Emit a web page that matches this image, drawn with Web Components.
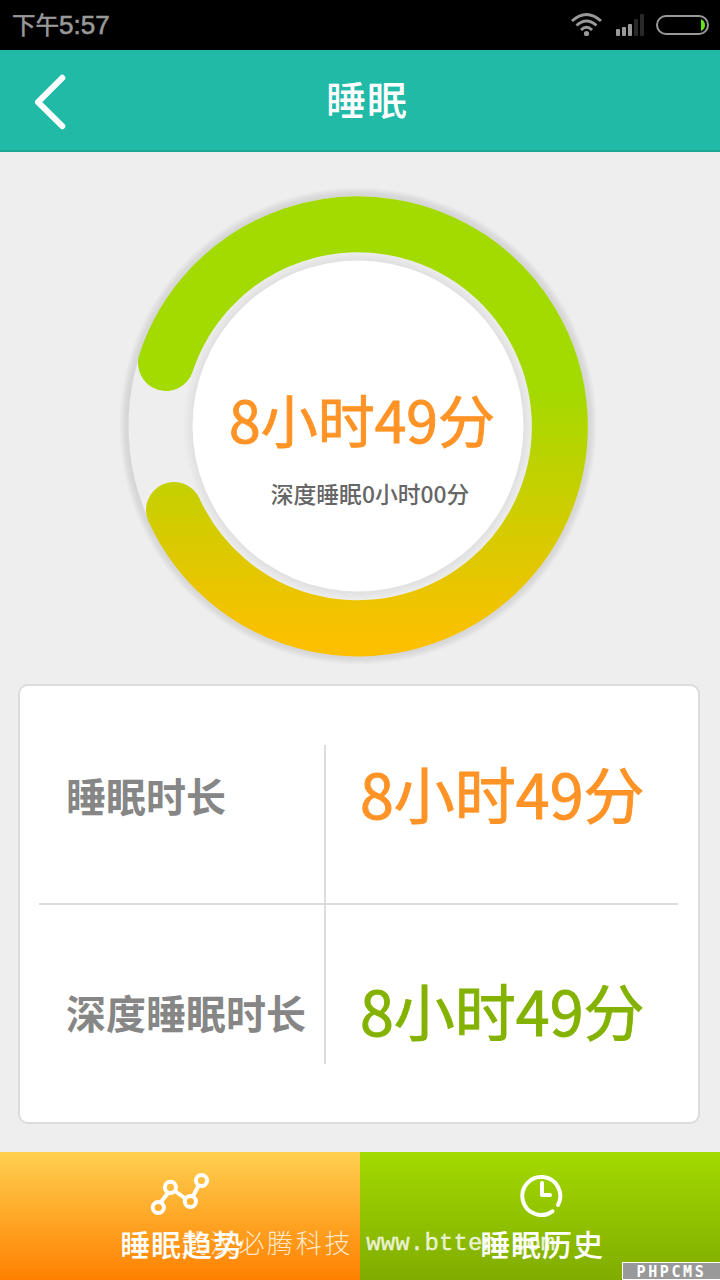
<!DOCTYPE html>
<html lang="zh-CN">
<head>
<meta charset="utf-8">
<title>睡眠</title>
<style>
    html, body {
        margin: 0;
        padding: 0;
    }

    body {
        width: 720px;
        height: 1280px;
        overflow: hidden;
        background: #eee;
        font-family: "Noto Sans CJK SC", sans-serif;
    }
</style>
</head>
<body>
<sleep-app></sleep-app>

<template id="status_bar">
    <style>
        :host {
            display: flex;
            align-items: center;
            height: 50px;
            padding: 0 11px 0 12px;
            box-sizing: border-box;
            background: #000;
            color: #999;
        }

        .time {
            flex: 1;
            font: 26px/50px "Liberation Sans", "Noto Sans CJK SC", sans-serif;
            -webkit-text-stroke: 0.6px #999;
        }

        .time span {
            font-size: 23.5px;
        }

        svg {
            display: block;
        }
    </style>
    <div class="time"><span>下午</span>5:57</div>
    <svg width="139" height="50" viewBox="570 0 139 50" fill="none">
        <g stroke="#999" stroke-width="3">
            <path d="M572 21Q586.500 8 601 21"/>
            <path d="M576.500 25.500Q586.500 16.500 596.500 25.500"/>
            <path d="M581 30Q586.500 24.500 592 30"/>
        </g>
        <circle cx="586.500" cy="33.500" r="2.600" fill="#999"/>
        <g fill="#999">
            <rect x="616" y="29" width="4" height="7" rx="1"/>
            <rect x="622" y="27" width="4" height="9" rx="1"/>
            <rect x="628" y="24" width="4" height="12" rx="1"/>
        </g>
        <g fill="#292929">
            <rect x="634" y="19" width="4" height="17" rx="1"/>
            <rect x="640" y="14" width="4" height="22" rx="1"/>
        </g>
        <rect x="657" y="16" width="51" height="18" rx="9" stroke="#999" stroke-width="2"/>
        <path d="M701 19Q705 21 705 25T701 31Z" fill="#62e418"/>
    </svg>
</template>

<template id="title_bar">
    <style>
        :host {
            display: grid;
            grid-template-columns: 100px 1fr 100px;
            height: 102px;
            box-sizing: border-box;
            border-bottom: 2px solid #1da794;
            background: #20baa7;
            color: #fff;
        }

        h1 {
            margin: 0;
            padding-left: 14px;
            font-size: 40px;
            font-weight: 500;
            line-height: 97px;
            letter-spacing: 1px;
            text-align: center;
        }
    </style>
    <svg width="100" height="100" viewBox="0 0 100 100">
        <path d="M62.300 27.800L38 52.200L62.300 76.200" fill="none" stroke="#fff" stroke-width="6" stroke-linecap="round" stroke-linejoin="round"/>
    </svg>
    <h1><slot></slot></h1>
</template>

<template id="sleep_ring">
    <style>
        :host {
            display: grid;
            height: 532px;
        }

        svg, .label {
            grid-area: 1 / 1;
        }

        .label {
            display: flex;
            flex-direction: column;
            align-items: center;
            z-index: 1;
            white-space: nowrap;
        }

        .total {
            margin: 226px 0 0 4px;
            font-size: 57px;
            line-height: 80px;
            color: #ff9326;
            -webkit-text-stroke: 0.9px #ff9326;
        }

        .deep {
            margin: 19px 0 0 20px;
            font-size: 22.8px;
            font-weight: 500;
            line-height: 34px;
            color: #666;
        }
    </style>
    <svg width="720" height="532" viewBox="0 152 720 532">
        <defs>
            <linearGradient id="arc" gradientUnits="userSpaceOnUse" x1="0" y1="390" x2="0" y2="642">
                <stop offset="0" stop-color="#a3da00"/>
                <stop offset="1" stop-color="#fcc000"/>
            </linearGradient>
            <radialGradient id="outer" gradientUnits="userSpaceOnUse" cx="358" cy="426" r="239">
                <stop offset="0.962" stop-color="#d5d5d5"/>
                <stop offset="0.976" stop-color="#dadada"/>
                <stop offset="1" stop-color="#eee"/>
            </radialGradient>
            <radialGradient id="inner" gradientUnits="userSpaceOnUse" cx="358" cy="426" r="175">
                <stop offset="0.945" stop-color="#e0e0e0"/>
                <stop offset="1" stop-color="#eee"/>
            </radialGradient>
        </defs>
        <circle cx="358" cy="426" r="239" fill="url(#outer)"/>
        <circle cx="358" cy="426" r="229.500" fill="#eee"/>
        <circle cx="358" cy="426" r="175" fill="url(#inner)"/>
        <circle cx="358" cy="426" r="165.500" fill="#fff"/>
        <path d="M166 363A202 202 0 1 1 174 510" fill="none" stroke="url(#arc)" stroke-width="56" stroke-linecap="round"/>
    </svg>
    <div class="label">
        <div class="total"><slot name="total"></slot></div>
        <div class="deep"><slot name="deep"></slot></div>
    </div>
</template>

<template id="sleep_card">
    <style>
        :host {
            display: grid;
            grid-template-rows: 160px 159px;
            height: 440px;
            margin: 0 20px 28px 18px;
            padding: 59px 20px 58px 19px;
            box-sizing: border-box;
            border: 2px solid #dcdcdc;
            border-radius: 10px;
            background: #fff;
        }
    </style>
    <slot></slot>
</template>

<template id="sleep_row">
    <style>
        :host {
            display: grid;
            grid-template-columns: 287px 1fr;
        }

        :host(:first-child) {
            border-bottom: 2px solid #dcdcdc;
        }

        div {
            display: flex;
            align-items: center;
            height: 102px;
            white-space: nowrap;
        }

        :host(:not(:first-child)) div {
            padding-top: 57px;
        }

        :host(:first-child) div {
            padding-bottom: 56px;
        }

        .name {
            padding-left: 27px;
            border-right: 2px solid #dcdcdc;
            font-size: 40px;
            font-weight: 700;
            line-height: 58px;
            color: #868686;
        }

        .name slot {
            display: block;
            margin-top: -3px;
        }

        .value {
            padding-left: 34px;
            font-size: 61px;
            line-height: 88px;
            color: var(--value-color);
            -webkit-text-stroke: 0.9px var(--value-color);
        }

        .value slot {
            display: block;
            margin-top: -7px;
        }
    </style>
    <div class="name"><slot></slot></div>
    <div class="value"><slot name="value"></slot></div>
</template>

<template id="nav_button">
    <style>
        :host {
            display: flex;
            flex: 1;
            flex-direction: column;
            align-items: center;
            height: 128px;
            color: #fff;
        }

        .icon {
            height: 69px;
        }

        .text {
            margin-left: 4px;
            font-size: 30px;
            font-weight: 500;
            line-height: 44px;
            letter-spacing: 0.9px;
        }
    </style>
    <div class="icon"><slot name="icon"></slot></div>
    <div class="text"><slot></slot></div>
</template>

<template id="water_mark">
    <style>
        /* site stamp laid over the two buttons */
        :host {
            position: absolute;
            left: 181px;
            top: 1222px;
            display: flex;
            gap: 13px;
            color: rgba(255, 255, 255, 0.8);
            white-space: nowrap;
            line-height: 40px;
        }

        .cn {
            font-size: 26px;
            font-weight: 300;
            letter-spacing: 2.700px;
        }

        .url {
            font: 24px/44px "Liberation Mono", monospace;
            letter-spacing: 0.150px;
            -webkit-text-stroke: 0.4px;
        }
    </style>
    <span class="cn">武汉必腾科技</span>
    <span class="url">www.btten.com</span>
</template>

<template id="cms_badge">
    <style>
        :host {
            position: absolute;
            left: 622px;
            top: 1262px;
            width: 98px;
            height: 18px;
            box-sizing: border-box;
            border: solid #fff;
            border-width: 1px 0 1px 1px;
            background: #999;
            color: #fff;
            font: bold 15px/18px "DejaVu Sans Mono", monospace;
            letter-spacing: 2.600px;
            text-align: center;
        }
    </style>
    PHPCMS
</template>

<template id="sleep_app">
    <style>
        :host {
            display: flex;
            flex-direction: column;
            height: 1280px;
            position: relative;
        }

        nav {
            display: flex;
        }

        .trend {
            background: linear-gradient(#ffd050, #ff8000);
        }

        .history {
            background: linear-gradient(#a3da00, #80ac00);
        }

        svg {
            display: block;
        }
    </style>
    <status-bar></status-bar>
    <title-bar>睡眠</title-bar>
    <sleep-ring>
        <span slot="total">8小时49分</span>
        <span slot="deep">深度睡眠0小时00分</span>
    </sleep-ring>
    <sleep-card>
        <sleep-row style="--value-color: #ff9326">睡眠时长<span slot="value">8小时49分</span></sleep-row>
        <sleep-row style="--value-color: #84b200">深度睡眠时长<span slot="value">8小时49分</span></sleep-row>
    </sleep-card>
    <nav>
        <nav-button class="trend">
            <svg slot="icon" width="60" height="69" viewBox="150 1152 60 69" fill="none" stroke="#fff" stroke-width="4">
                <path d="M161 1202L168 1193M175 1191L186 1199M193 1196L199 1185"/>
                <circle cx="158.300" cy="1207.500" r="5.600"/>
                <circle cx="170.400" cy="1187.300" r="5.600"/>
                <circle cx="190.400" cy="1201.500" r="5.600"/>
                <circle cx="201.500" cy="1180.500" r="5.600"/>
            </svg>
            睡眠趋势
        </nav-button>
        <nav-button class="history">
            <svg slot="icon" width="60" height="69" viewBox="509 1153 60 69" fill="none" stroke="#fff" stroke-width="4" stroke-linecap="round">
                <path d="M557 1206A19 19 0 1 0 551.500 1212.300"/>
                <path d="M541 1184V1196H549" stroke-linejoin="round"/>
            </svg>
            睡眠历史
        </nav-button>
    </nav>
    <water-mark></water-mark>
    <cms-badge></cms-badge>
</template>

<script>
    (function (customElements) {
        'use strict'

        // Every element only clones its own template: my-element -> #my_element
        function register(name) {
            customElements.define(name, class extends HTMLElement {
                constructor() {
                    super();
                    const templ = document.querySelector('#' + name.replace('-', '_'));
                    this.attachShadow({ mode: 'open' }).appendChild(document.importNode(templ.content, true));
                }
            });
        }

        ['status-bar', 'title-bar', 'sleep-ring', 'sleep-card', 'sleep-row',
            'nav-button', 'water-mark', 'cms-badge', 'sleep-app'].forEach(register);
    })(window.customElements);
</script>
</body>
</html>
